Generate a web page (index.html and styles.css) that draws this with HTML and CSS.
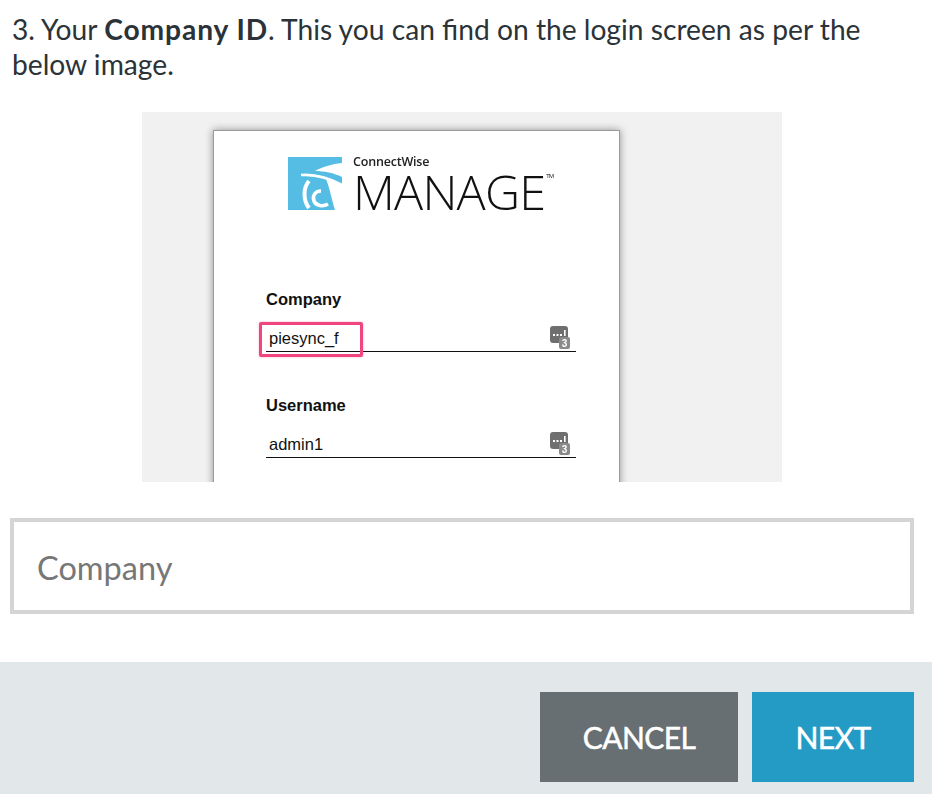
FILE: index.html
```html
<!DOCTYPE html>
<html lang="en">
<head>
  <meta charset="UTF-8">
  <title>Company ID</title>
  <link rel="stylesheet" href="styles.css">
</head>
<body>
  <div class="content">
    <p class="intro">3. Your <strong>Company ID</strong>. This you can find on the login screen as per the below image.</p>

    <!-- Login screen picture -->
    <div class="shot">
      <div class="login-card">
        <div class="logo">
          <svg class="logo-mark" width="54" height="53" viewBox="0 0 54 53">
            <rect width="54" height="53" fill="#55bde3"/>
            <path d="M54 6 C44 7 34 10 27 14 C36 14 46 16 54 20 Z" fill="#fff"/>
            <path d="M38 22 C42 32 44 44 47 53 L54 53 L54 27 Z" fill="#fff"/>
            <path d="M13 18 C26 17 41 21 54 28" fill="none" stroke="#fff" stroke-width="2.6"/>
            <path d="M21 24 C15 31 15 43 21 51" fill="none" stroke="#fff" stroke-width="4"/>
            <path d="M33 34 C27 34 24 39 26 44 C28 49 35 50 40 47" fill="none" stroke="#fff" stroke-width="3.6"/>
          </svg>
          <div class="logo-text">
            <span class="logo-brand">ConnectWise</span>
            <span class="logo-name">MANAGE<sup class="logo-tm">TM</sup></span>
          </div>
        </div>

        <div class="login-field login-field-first">
          <div class="login-label">Company</div>
          <div class="login-value">
            <span>piesync_f</span>
            <svg class="key-icon" width="20" height="24" viewBox="0 0 20 24">
              <rect x="0" y="0" width="18" height="17" rx="3" fill="#6f6f6f"/>
              <rect x="3" y="8" width="2" height="2" fill="#fff"/>
              <rect x="6.5" y="8" width="2" height="2" fill="#fff"/>
              <rect x="10" y="8" width="2" height="2" fill="#fff"/>
              <rect x="14" y="4" width="1.6" height="6" fill="#fff"/>
              <rect x="9" y="11" width="11" height="12" rx="2" fill="#8a8a8a"/>
              <text x="14.5" y="21" class="key-num">3</text>
            </svg>
            <div class="highlight"></div>
          </div>
        </div>

        <div class="login-field">
          <div class="login-label">Username</div>
          <div class="login-value">
            <span>admin1</span>
            <svg class="key-icon" width="20" height="24" viewBox="0 0 20 24">
              <rect x="0" y="0" width="18" height="17" rx="3" fill="#6f6f6f"/>
              <rect x="3" y="8" width="2" height="2" fill="#fff"/>
              <rect x="6.5" y="8" width="2" height="2" fill="#fff"/>
              <rect x="10" y="8" width="2" height="2" fill="#fff"/>
              <rect x="14" y="4" width="1.6" height="6" fill="#fff"/>
              <rect x="9" y="11" width="11" height="12" rx="2" fill="#8a8a8a"/>
              <text x="14.5" y="21" class="key-num">3</text>
            </svg>
          </div>
        </div>
      </div>
    </div>

    <input class="company-input" type="text" placeholder="Company">
  </div>

  <div class="footer">
    <button class="btn btn-cancel">CANCEL</button>
    <button class="btn btn-next">NEXT</button>
  </div>
</body>
</html>
```

FILE: styles.css
```css
body, p {
  margin: 0;
  padding: 0;
}

*, *::before, *::after {
  box-sizing: border-box;
}

body {
  font-family: Lato, "Liberation Sans", sans-serif;
  background-color: #fff;
  color: #2b3338;
  width: 932px;
  height: 794px;
  overflow: hidden;
}

.content {
  height: 662px;
  padding: 12px 18px 0 10px;
}

.intro {
  font-size: 28.2px;
  line-height: 35px;
  padding-left: 2px;
  width: 880px;
}

.intro strong {
  font-weight: 700;
  letter-spacing: 0.9px;
}

/* Login screen picture */
.shot {
  width: 640px;
  height: 370px;
  margin: 30px 0 36px 132px;
  padding: 18px 0 0 71px;
  background-color: #f1f1f1;
  overflow: hidden;
}

.login-card {
  width: 407px;
  height: 420px;
  padding: 26px 44px 0 52px;
  background-color: #fff;
  border: 1px solid #9a9a9a;
  box-shadow: 0 0 8px rgba(0, 0, 0, 0.4);
  font-family: "Liberation Sans", Arial, sans-serif;
  color: #111;
}

.logo {
  display: flex;
  gap: 11px;
  margin-left: 22px;
  align-items: flex-start;
}

.logo-text {
  display: flex;
  flex-direction: column;
  margin-top: -3px;
  filter: blur(0.3px);
}

.logo-brand {
  font-family: "Open Sans", sans-serif;
  font-weight: 600;
  font-size: 12.5px;
  line-height: 16px;
  color: #222;
  letter-spacing: -0.2px;
}

.logo-name {
  font-family: "Open Sans", sans-serif;
  font-weight: 300;
  font-size: 48.5px;
  line-height: 42px;
  color: #111;
  letter-spacing: -0.8px;
  position: relative;
}

.logo-tm {
  position: absolute;
  top: 2px;
  margin-left: 1px;
  font-size: 6px;
  line-height: 8px;
  font-weight: 400;
}

.login-field-first {
  margin-top: 77px;
}

.login-field {
  width: 310px;
}

.login-field + .login-field {
  margin-top: 43px;
}

.login-label {
  font-size: 16.5px;
  font-weight: 700;
  line-height: 20px;
}

.login-value {
  position: relative;
  display: flex;
  justify-content: space-between;
  height: 31px;
  margin-top: 12px;
  padding: 7px 0 0 3px;
  border-bottom: 1.5px solid #111;
  font-size: 16.5px;
  line-height: 20px;
}

.key-icon {
  margin: -2px 0 0 0;
  transform: translate(-6px, 0);
  filter: blur(0.4px);
}

.key-num {
  font-family: "Liberation Sans", Arial, sans-serif;
  font-size: 10px;
  font-weight: 700;
  fill: #fff;
  text-anchor: middle;
}

.highlight {
  position: absolute;
  left: -7px;
  top: 1px;
  width: 104px;
  height: 35px;
  border: 3px solid #f0457f;
  border-radius: 2px;
  box-shadow: 0 0 2px rgba(240, 69, 127, 0.5);
}

/* Company field */
.company-input {
  display: block;
  width: 904px;
  height: 96px;
  padding: 2px 23px 0;
  border: 4px solid #d5d5d5;
  border-radius: 0;
  outline: none;
  font-family: Lato, sans-serif;
  font-size: 32.5px;
  color: #777;
  background-color: #fff;
}

.company-input::placeholder {
  color: #777;
  opacity: 1;
}

/* Footer buttons */
.footer {
  display: flex;
  justify-content: flex-end;
  gap: 14px;
  height: 132px;
  padding: 30px 18px 0 0;
  background-color: #e2e7ea;
}

.btn {
  height: 90px;
  border: none;
  color: #fff;
  font-family: Lato, sans-serif;
  font-size: 30px;
  letter-spacing: -0.6px;
  -webkit-text-stroke: 0.5px #fff;
}

.btn-cancel {
  width: 198px;
  background-color: #676f73;
}

.btn-next {
  width: 162px;
  background-color: #239bc5;
}
```
